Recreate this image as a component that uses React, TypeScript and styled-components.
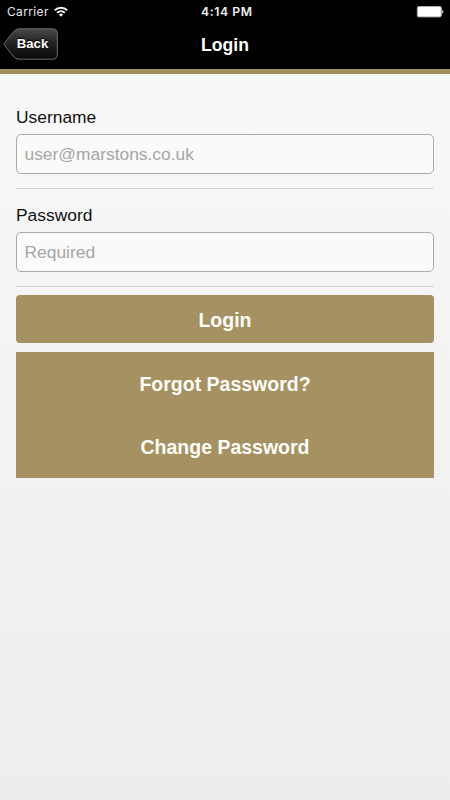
import React from "react";
import styled, { createGlobalStyle } from "styled-components";

const GlobalStyle = createGlobalStyle`
  * { box-sizing: border-box; }
  html, body { margin: 0; padding: 0; }
  body { font-family: "Liberation Sans", Arial, sans-serif; }
`;

const Screen = styled.div`
  display: flex;
  flex-direction: column;
  width: 450px;
  height: 800px;
  overflow: hidden;
  background: linear-gradient(#f9f9f9, #ededed);
`;

const Header = styled.header`
  height: 74px;
  background: #000;
  border-bottom: 5px solid #a18f60;
  color: #fff;
`;

const StatusBar = styled.div`
  display: grid;
  grid-template-columns: 194px auto 1fr;
  align-items: center;
  height: 23px;
  padding: 0 6px 0 7px;
  font-family: Inter, sans-serif;
  font-size: 12px;
  line-height: 23px;
`;

const Carrier = styled.div`
  display: flex;
  align-items: center;
  gap: 5px;
  color: #e8e8e8;
  letter-spacing: 0.35px;
`;

const Clock = styled.div`
  font-weight: 600;
  font-size: 12.2px;
  letter-spacing: 0.6px;
  color: #f0f0f0;
`;

const Battery = styled.svg`
  justify-self: end;
`;

const NavBar = styled.div`
  display: grid;
  grid-template-columns: 1fr auto 1fr;
  align-items: center;
  height: 42px;
  padding: 0 3px;
`;

const BackButton = styled.button`
  display: grid;
  width: 55px;
  height: 33px;
  padding: 0;
  border: 0;
  background: none;
  color: #fff;
  font: bold 13.2px/32px "Liberation Sans", Arial, sans-serif;

  > * { grid-area: 1 / 1; }
`;

const BackLabel = styled.span`
  z-index: 1;
  padding-left: 4px;
  text-align: center;
  text-shadow: 0 -1px 1px #000;
`;

const Title = styled.h1`
  margin: 0;
  padding-top: 1px;
  font-size: 17.6px;
  line-height: 42px;
  font-weight: bold;
`;

const Form = styled.form`
  display: flex;
  flex-direction: column;
  padding: 30px 16px 0;
`;

const Field = styled.div`
  height: 98px;
  padding-top: 3px;
`;

const Label = styled.label`
  display: block;
  height: 27px;
  color: #111;
  font-size: 17.4px;
  line-height: 21px;
`;

const Input = styled.input`
  display: block;
  width: 100%;
  height: 40px;
  padding: 0 7.5px;
  border: 1px solid #aaa;
  border-radius: 5px;
  outline: 0;
  background: #fafafa;
  font: 17.4px "Liberation Sans", Arial, sans-serif;

  &::placeholder { color: #a6a6a6; opacity: 1; }
`;

const Divider = styled.hr`
  height: 1px;
  margin: 14px 0 0;
  border: 0;
  background: #d4d4d4;
`;

const GoldButton = styled.button<{ $rounded?: boolean }>`
  height: ${({ $rounded }) => ($rounded ? 48 : 63)}px;
  padding: 2px 0 0;
  border: 0;
  border-radius: ${({ $rounded }) => ($rounded ? 4 : 0)}px;
  background: #a59161;
  color: #fffefa;
  font: bold 19.5px "Liberation Sans", Arial, sans-serif;
`;

const Actions = styled.div`
  display: flex;
  flex-direction: column;
  gap: 9px;
  margin-top: -5px;
`;

const LinkGroup = styled.div`
  display: flex;
  flex-direction: column;
`;

function WifiIcon() {
  return (
    <svg width="14" height="11" viewBox="0 0 14 11" fill="none" stroke="#f2f2f2" strokeWidth="2">
      <path d="M0.8 4.2C4.3 0.8 9.7 0.8 13.2 4.2" />
      <path d="M3.1 6.7C5.3 4.6 8.7 4.6 10.9 6.7" />
      <path d="M7 10.7L4.8 8.5C6.1 7.3 7.9 7.3 9.2 8.5Z" fill="#f2f2f2" stroke="none" />
    </svg>
  );
}

function BackShape() {
  return (
    <svg width="55" height="33" viewBox="0 0 55 33">
      <defs>
        <linearGradient id="backFill" x1="0" y1="0" x2="0" y2="1">
          <stop offset="0" stopColor="#484848" />
          <stop offset="0.5" stopColor="#202020" />
          <stop offset="1" stopColor="#080808" />
        </linearGradient>
      </defs>
      <path
        d="M0.7 16.2L10 4.2Q13 0.8 16 0.8H49.5Q54.3 0.8 54.3 5.5V26.5Q54.3 31.2 49.5 31.2H16Q13 31.2 10 28Z"
        fill="url(#backFill)"
        stroke="#6c6c6c"
      />
    </svg>
  );
}

export default function App() {
  return (
    <>
      <GlobalStyle />
      <Screen>
        <Header>
          <StatusBar>
            <Carrier>
              Carrier
              <WifiIcon />
            </Carrier>
            <Clock>4:14 PM</Clock>
            <Battery width="28" height="12" viewBox="0 0 28 12">
              <rect x="1.3" y="0.5" width="24" height="10.4" rx="1.5" fill="#fff" stroke="#aaa" />
              <path d="M26.2 3.9C27.7 4.1 27.7 7.3 26.2 7.5Z" fill="#ddd" />
            </Battery>
          </StatusBar>
          <NavBar>
            <BackButton type="button">
              <BackShape />
              <BackLabel>Back</BackLabel>
            </BackButton>
            <Title>Login</Title>
          </NavBar>
        </Header>
        <Form>
          <Field>
            <Label htmlFor="username">Username</Label>
            <Input id="username" placeholder="user@marstons.co.uk" />
            <Divider />
          </Field>
          <Field>
            <Label htmlFor="password">Password</Label>
            <Input id="password" type="password" placeholder="Required" />
            <Divider />
          </Field>
          <Actions>
            <GoldButton type="button" $rounded>Login</GoldButton>
            <LinkGroup>
              <GoldButton type="button">Forgot Password?</GoldButton>
              <GoldButton type="button">Change Password</GoldButton>
            </LinkGroup>
          </Actions>
        </Form>
      </Screen>
    </>
  );
}
